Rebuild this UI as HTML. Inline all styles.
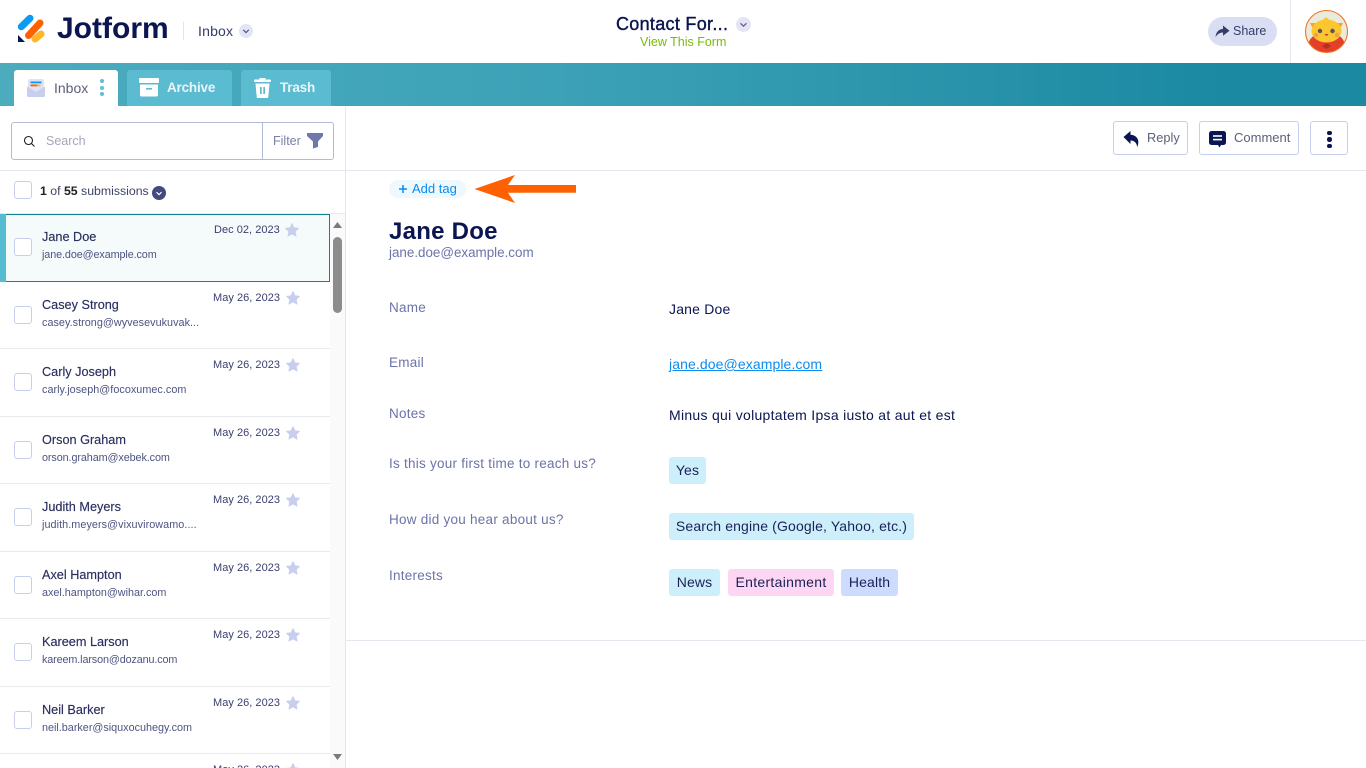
<!DOCTYPE html>
<html lang="en"><head><meta charset="utf-8"><title>Jotform Inbox</title>
<style>
html,body{margin:0;padding:0;width:1366px;height:768px;overflow:hidden}
body{background:#fff;font-family:"Liberation Sans",sans-serif;color:#0a1551}
#w{position:absolute;left:0;top:0;width:1366px;height:768px;overflow:hidden;background:#fff}
.a,.t{position:absolute}
.t{white-space:nowrap;line-height:16px}
svg{position:absolute;display:block;overflow:visible}
.cb{position:absolute;left:14px;width:16px;height:16px;border:1px solid #c8ceed;border-radius:3px;background:#fff}
.nm{position:absolute;left:42px;font-size:12.7px;color:#2a2f5e;line-height:16px;white-space:nowrap;-webkit-text-stroke:.15px #2a2f5e}
.em{position:absolute;left:42px;font-size:10.8px;color:#4d5480;line-height:14px;white-space:nowrap}
.dt{position:absolute;left:213px;font-size:11px;color:#3a4070;line-height:14px;white-space:nowrap;letter-spacing:.03px}
.sep{position:absolute;left:0;width:330px;height:1px;background:#e9eaf0}
.lb{position:absolute;left:389px;font-size:13.5px;color:#6c73a8;line-height:16px;white-space:nowrap;letter-spacing:.25px}
.v{position:absolute;left:669px;font-size:14px;color:#0a1551;line-height:16px;white-space:nowrap}
.pill{position:absolute;height:27px;line-height:27px;border-radius:3px;text-align:center;font-size:14px;color:#1b2155;white-space:nowrap;letter-spacing:.15px}
.btn{position:absolute;top:121px;height:34px;border:1px solid #c8ceed;border-radius:3px;background:#fff;box-sizing:border-box}
.s path{fill:#c8ceed;stroke:#c8ceed;stroke-width:.8;stroke-linejoin:round}
</style></head><body><div id="w">

<!-- header -->
<svg style="left:17px;top:14px" width="28" height="29" viewBox="0 0 28 29">
<line x1="4.300" y1="12.800" x2="13" y2="4.200" stroke="#0a9cf5" stroke-width="7" stroke-linecap="round"/>
<line x1="11.500" y1="21.500" x2="23" y2="9" stroke="#ff6100" stroke-width="7" stroke-linecap="round"/>
<line x1="18" y1="25" x2="24" y2="20" stroke="#ffb629" stroke-width="7" stroke-linecap="round"/>
<path d="M1 21 L1 28 L8 28 Z" fill="#0a1551"/>
</svg>
<div class="t" style="left:57px;top:11px;font-size:30px;line-height:36px;font-weight:bold;color:#0a1551;letter-spacing:0">Jotform</div>
<div class="a" style="left:183px;top:22px;width:1px;height:18px;background:#e3e5f0"></div>
<div class="t" style="left:198px;top:23px;font-size:14px;color:#343c6a;letter-spacing:.2px">Inbox</div>
<div class="a" style="left:239px;top:24px;width:14px;height:14px;border-radius:50%;background:#e3e5f5"></div>
<svg style="left:239px;top:24px" width="14" height="14"><path d="M4.200 5.800 L7 8.600 L9.800 5.800" fill="none" stroke="#555c88" stroke-width="1.200"/></svg>

<div class="t" style="left:616px;top:14px;font-size:18px;line-height:20px;color:#0a1551;letter-spacing:.3px;-webkit-text-stroke:.4px #0a1551">Contact For...</div>
<div class="a" style="left:736px;top:17px;width:15px;height:15px;border-radius:50%;background:#e3e5f5"></div>
<svg style="left:736px;top:17px" width="15" height="15"><path d="M4.500 6.300 L7.500 9.200 L10.500 6.300" fill="none" stroke="#555c88" stroke-width="1.200"/></svg>
<div class="t" style="left:640px;top:34px;font-size:12.5px;color:#78bb07">View This Form</div>

<div class="a" style="left:1208px;top:17px;width:69px;height:29px;border-radius:15px;background:#dadef3"></div>
<svg style="left:1215px;top:25px" width="15" height="13" viewBox="0 0 15 13"><path d="M0.500 12 C1 7 4 4 8 4 V0.500 L14.500 5.800 L8 10.800 V7.500 C5 7.500 2.500 9 0.500 12Z" fill="#343c6a"/></svg>
<div class="t" style="left:1233px;top:23px;font-size:12.5px;color:#343c6a">Share</div>
<div class="a" style="left:1290px;top:0;width:1px;height:63px;background:#e6e7ee"></div>

<svg style="left:1305px;top:10px" width="43" height="43" viewBox="0 0 43 43">
<clipPath id="c"><circle cx="21.500" cy="21.500" r="21"/></clipPath>
<circle cx="21.500" cy="21.500" r="21" fill="#e9ebdd"/>
<g clip-path="url(#c)">
<path d="M2 43 C2 31 7 25 12 25 L31 25 C36 25 41 31 41 43Z" fill="#e2402a"/>
<path d="M5 13 L13 13 L9 21Z M38 13 L30 13 L34 21Z" fill="#f0a72c"/>
<ellipse cx="21.500" cy="21" rx="15" ry="11.500" fill="#fcc62f"/>
<path d="M17 10.500 L21 7 L25 10.500Z" fill="#fcc62f"/>
<circle cx="15" cy="21" r="2.200" fill="#54545e"/><circle cx="27.500" cy="21" r="2.200" fill="#54545e"/>
<circle cx="11" cy="25" r="2" fill="#f59c4a"/><circle cx="32" cy="25" r="2" fill="#f59c4a"/>
<path d="M19.500 24 Q21.500 27.500 23.500 24Z" fill="#c33a2a"/>
<path d="M17 36 L21.500 33 L26 36 L21.500 39Z" fill="#b92c1f"/>
</g>
<circle cx="21.500" cy="21.500" r="21" fill="none" stroke="#f3711f" stroke-width="1.100"/>
</svg>

<!-- toolbar -->
<div class="a" style="left:0;top:63px;width:1366px;height:43px;background:linear-gradient(90deg,#4cacbe 0%,#3da2b7 40%,#1b89a2 90%,#1b89a2 100%)"></div>
<div class="a" style="left:14px;top:70px;width:104px;height:36px;background:#fff;border-radius:3px 3px 0 0"></div>
<svg style="left:26px;top:78px" width="20" height="20" viewBox="0 0 20 20">
<rect x="2" y="1" width="16" height="13" rx="2" fill="#dfe3f5"/>
<rect x="4.500" y="3.500" width="11" height="1.800" fill="#0a9cf5"/>
<rect x="4.500" y="6.500" width="7" height="1.800" fill="#ff6100"/>
<rect x="12" y="6.500" width="2.500" height="1.800" fill="#ffb629"/>
<path d="M1 8.500 L10 14 L19 8.500 V17.500 A1.500 1.500 0 0 1 17.500 19 H2.500 A1.500 1.500 0 0 1 1 17.500Z" fill="#c8ceed"/>
</svg>
<div class="t" style="left:54px;top:80px;font-size:14px;color:#5c6079">Inbox</div>
<div class="a" style="left:99.500px;top:79px;width:4.400px;height:4.400px;border-radius:50%;background:#5ec0d2"></div>
<div class="a" style="left:99.500px;top:85.500px;width:4.400px;height:4.400px;border-radius:50%;background:#5ec0d2"></div>
<div class="a" style="left:99.500px;top:92px;width:4.400px;height:4.400px;border-radius:50%;background:#5ec0d2"></div>

<div class="a" style="left:127px;top:70px;width:105px;height:36px;background:#5bbcd1;border-radius:3px 3px 0 0"></div>
<svg style="left:139px;top:78px" width="20" height="19" viewBox="0 0 20 19"><rect x="0" y="0" width="20" height="5" rx="1" fill="#fff"/><path d="M1 6.500 H19 V17 A1.500 1.500 0 0 1 17.500 18.500 H2.500 A1.500 1.500 0 0 1 1 17Z" fill="#fff"/><rect x="7" y="10" width="6" height="1.600" fill="#5bbcd1"/></svg>
<div class="t" style="left:167px;top:80px;font-size:13.5px;font-weight:bold;color:#e9f6f9;letter-spacing:-.2px">Archive</div>

<div class="a" style="left:241px;top:70px;width:90px;height:36px;background:#5bbcd1;border-radius:3px 3px 0 0"></div>
<svg style="left:254px;top:78px" width="17" height="20" viewBox="0 0 17 20"><rect x="0" y="1.500" width="17" height="2.500" rx="1" fill="#fff"/><rect x="5.500" y="0" width="6" height="2" fill="#fff"/><path d="M1.500 5.500 H15.500 L14.300 19 A1 1 0 0 1 13.300 20 H3.700 A1 1 0 0 1 2.700 19Z" fill="#fff"/><rect x="6" y="9" width="1.700" height="7" fill="#5bbcd1"/><rect x="9.300" y="9" width="1.700" height="7" fill="#5bbcd1"/></svg>
<div class="t" style="left:280px;top:80px;font-size:13.5px;font-weight:bold;color:#e9f6f9;letter-spacing:-.2px">Trash</div>

<!-- left pane -->
<div class="a" style="left:345px;top:106px;width:1px;height:662px;background:#e6e7ee"></div>
<div class="a" style="left:11px;top:122px;width:323px;height:38px;box-sizing:border-box;border:1px solid #b5b9d9;border-radius:3px;background:#fff"></div>
<div class="a" style="left:262px;top:123px;width:1px;height:36px;background:#b5b9d9"></div>
<svg style="left:23px;top:135px" width="13" height="13" viewBox="0 0 13 13"><circle cx="5.500" cy="5.500" r="4" fill="none" stroke="#1a1a2a" stroke-width="1.100"/><line x1="8.500" y1="8.500" x2="11.500" y2="11.500" stroke="#1a1a2a" stroke-width="1.100"/></svg>
<div class="t" style="left:46px;top:133px;font-size:12.5px;color:#a4a8b8">Search</div>
<div class="t" style="left:273px;top:133px;font-size:12.5px;color:#7a80a8">Filter</div>
<svg style="left:307px;top:133px" width="16" height="16" viewBox="0 0 16 16"><path d="M0 0 H16 V3 L11 8.500 V14 L6 15.500 V8.500 L0 3Z" fill="#7077ad"/></svg>
<div class="a" style="left:0;top:170px;width:1366px;height:1px;background:#e6e7ee"></div>

<div class="cb" style="top:181px"></div>
<div class="t" style="left:40px;top:183px;font-size:12.3px;color:#3e4468"><b style="color:#222">1</b> of <b style="color:#222">55</b> submissions</div>
<div class="a" style="left:152px;top:186px;width:14px;height:14px;border-radius:50%;background:#434a7e"></div>
<svg style="left:152px;top:186px" width="14" height="14"><path d="M4.500 6.200 L7 8.700 L9.500 6.200" fill="none" stroke="#fff" stroke-width="1.200"/></svg>
<div class="a" style="left:0;top:213px;width:345px;height:1px;background:#e9eaf0"></div>

<!-- selected row -->
<div class="a" style="left:0;top:214px;width:330px;height:68px;box-sizing:border-box;background:#f5fbfb;border:1px solid #13828f;border-left:0"></div>
<div class="a" style="left:0;top:214px;width:6px;height:68px;background:#56bcd1"></div>

<div id="rows">
<div class="cb" style="top:238px"></div><div class="nm" style="top:229px">Jane Doe</div><div class="em" style="top:248px;letter-spacing:-.1px">jane.doe@example.com</div><div class="dt" style="left:214px;top:223px">Dec 02, 2023</div>
<svg class="s" style="left:285px;top:223px" width="14" height="14" viewBox="0 0 14 14"><path d="M7 .5 L9 4.800 L13.500 5.300 L10.200 8.500 L11.100 13.200 L7 10.900 L2.900 13.200 L3.800 8.500 L.5 5.300 L5 4.800Z"/></svg>

<div class="sep" style="top:348px"></div>
<div class="cb" style="top:306px"></div><div class="nm" style="top:297px">Casey Strong</div><div class="em" style="top:316px;letter-spacing:.04px">casey.strong@wyvesevukuvak...</div><div class="dt" style="top:291px">May 26, 2023</div>
<svg class="s" style="left:286px;top:291px" width="14" height="14" viewBox="0 0 14 14"><path d="M7 .5 L9 4.800 L13.500 5.300 L10.200 8.500 L11.100 13.200 L7 10.900 L2.900 13.200 L3.800 8.500 L.5 5.300 L5 4.800Z"/></svg>

<div class="sep" style="top:416px"></div>
<div class="cb" style="top:373px"></div><div class="nm" style="top:364px">Carly Joseph</div><div class="em" style="top:383px;letter-spacing:.04px">carly.joseph@focoxumec.com</div><div class="dt" style="top:358px">May 26, 2023</div>
<svg class="s" style="left:286px;top:358px" width="14" height="14" viewBox="0 0 14 14"><path d="M7 .5 L9 4.800 L13.500 5.300 L10.200 8.500 L11.100 13.200 L7 10.900 L2.900 13.200 L3.800 8.500 L.5 5.300 L5 4.800Z"/></svg>

<div class="sep" style="top:483px"></div>
<div class="cb" style="top:441px"></div><div class="nm" style="top:432px">Orson Graham</div><div class="em" style="top:451px;letter-spacing:-.09px">orson.graham@xebek.com</div><div class="dt" style="top:426px">May 26, 2023</div>
<svg class="s" style="left:286px;top:426px" width="14" height="14" viewBox="0 0 14 14"><path d="M7 .5 L9 4.800 L13.500 5.300 L10.200 8.500 L11.100 13.200 L7 10.900 L2.900 13.200 L3.800 8.500 L.5 5.300 L5 4.800Z"/></svg>

<div class="sep" style="top:551px"></div>
<div class="cb" style="top:508px"></div><div class="nm" style="top:499px">Judith Meyers</div><div class="em" style="top:518px;letter-spacing:.07px">judith.meyers@vixuvirowamo....</div><div class="dt" style="top:493px">May 26, 2023</div>
<svg class="s" style="left:286px;top:493px" width="14" height="14" viewBox="0 0 14 14"><path d="M7 .5 L9 4.800 L13.500 5.300 L10.200 8.500 L11.100 13.200 L7 10.900 L2.900 13.200 L3.800 8.500 L.5 5.300 L5 4.800Z"/></svg>

<div class="sep" style="top:618px"></div>
<div class="cb" style="top:576px"></div><div class="nm" style="top:567px">Axel Hampton</div><div class="em" style="top:586px">axel.hampton@wihar.com</div><div class="dt" style="top:561px">May 26, 2023</div>
<svg class="s" style="left:286px;top:561px" width="14" height="14" viewBox="0 0 14 14"><path d="M7 .5 L9 4.800 L13.500 5.300 L10.200 8.500 L11.100 13.200 L7 10.900 L2.900 13.200 L3.800 8.500 L.5 5.300 L5 4.800Z"/></svg>

<div class="sep" style="top:686px"></div>
<div class="cb" style="top:643px"></div><div class="nm" style="top:634px">Kareem Larson</div><div class="em" style="top:653px;letter-spacing:-.12px">kareem.larson@dozanu.com</div><div class="dt" style="top:628px">May 26, 2023</div>
<svg class="s" style="left:286px;top:628px" width="14" height="14" viewBox="0 0 14 14"><path d="M7 .5 L9 4.800 L13.500 5.300 L10.200 8.500 L11.100 13.200 L7 10.900 L2.900 13.200 L3.800 8.500 L.5 5.300 L5 4.800Z"/></svg>

<div class="sep" style="top:753px"></div>
<div class="cb" style="top:711px"></div><div class="nm" style="top:702px">Neil Barker</div><div class="em" style="top:721px">neil.barker@siquxocuhegy.com</div><div class="dt" style="top:696px">May 26, 2023</div>
<svg class="s" style="left:286px;top:696px" width="14" height="14" viewBox="0 0 14 14"><path d="M7 .5 L9 4.800 L13.500 5.300 L10.200 8.500 L11.100 13.200 L7 10.900 L2.900 13.200 L3.800 8.500 L.5 5.300 L5 4.800Z"/></svg>

<div class="dt" style="top:763px">May 26, 2023</div>
<svg class="s" style="left:286px;top:763px" width="14" height="14" viewBox="0 0 14 14"><path d="M7 .5 L9 4.800 L13.500 5.300 L10.200 8.500 L11.100 13.200 L7 10.900 L2.900 13.200 L3.800 8.500 L.5 5.300 L5 4.800Z"/></svg>
</div>

<!-- scrollbar -->
<div class="a" style="left:330px;top:214px;width:15px;height:554px;background:#fafafa"></div>
<svg style="left:333px;top:222px" width="9" height="6"><path d="M0 6 L4.500 0 L9 6Z" fill="#7b7b7b"/></svg>
<svg style="left:333px;top:754px" width="9" height="6"><path d="M0 0 L4.500 6 L9 0Z" fill="#7b7b7b"/></svg>
<div class="a" style="left:333px;top:237px;width:9px;height:76px;border-radius:5px;background:#8c8c8c"></div>

<!-- action buttons -->
<div class="btn" style="left:1113px;width:75px"></div>
<svg style="left:1123px;top:131px" width="16" height="16" viewBox="0 0 16 16"><path d="M0.500 6 L7.500 0 V3.800 C12 3.800 15.300 7 15.300 11 C15.300 13 14.800 15 14.200 16 C13.800 12.500 12 9.500 7.500 9.500 V13Z" fill="#0a1551"/></svg>
<div class="t" style="left:1147px;top:130px;font-size:12.8px;color:#5c6079">Reply</div>
<div class="btn" style="left:1199px;width:100px"></div>
<svg style="left:1209px;top:131px" width="17" height="17" viewBox="0 0 17 17"><path d="M2.500 0 H14.500 A2.500 2.500 0 0 1 17 2.500 V11.500 A2.500 2.500 0 0 1 14.500 14 H12 L10.500 16.500 L9 14 H2.500 A2.500 2.500 0 0 1 0 11.500 V2.500 A2.500 2.500 0 0 1 2.500 0Z" fill="#0a1551"/><rect x="4" y="4.200" width="9" height="1.600" fill="#fff"/><rect x="4" y="7.800" width="9" height="1.600" fill="#fff"/></svg>
<div class="t" style="left:1234px;top:130px;font-size:13px;color:#5c6079">Comment</div>
<div class="btn" style="left:1310px;width:38px"></div>
<div class="a" style="left:1327px;top:130.500px;width:4.500px;height:4.500px;border-radius:50%;background:#0a1551"></div>
<div class="a" style="left:1327px;top:137px;width:4.500px;height:4.500px;border-radius:50%;background:#0a1551"></div>
<div class="a" style="left:1327px;top:143.500px;width:4.500px;height:4.500px;border-radius:50%;background:#0a1551"></div>

<!-- content -->
<div class="a" style="left:389px;top:180px;width:77px;height:18px;border-radius:9px;background:#edf8ff"></div>
<svg style="left:398px;top:184px" width="10" height="10"><path d="M5 1 V9 M1 5 H9" stroke="#0a8cf0" stroke-width="1.500"/></svg>
<div class="t" style="left:412px;top:181px;font-size:13px;color:#0a8cf0">Add tag</div>
<svg style="left:474px;top:175px" width="103" height="29" viewBox="0 0 103 29"><path d="M0.500 14 L41 0 L34 10 H102 V17.700 H34 L41 28Z" fill="#ff6100"/></svg>

<div class="t" style="left:389px;top:218px;font-size:24px;line-height:28px;font-weight:bold;color:#0a1551;letter-spacing:.25px">Jane Doe</div>
<div class="t" style="left:389px;top:245px;font-size:13.4px;color:#6c73a8">jane.doe@example.com</div>

<div class="lb" style="top:300px">Name</div>
<div class="v" style="top:301px;letter-spacing:.2px">Jane Doe</div>
<div class="lb" style="top:355px">Email</div>
<div class="v" style="top:356px;color:#0a8cf0;text-decoration:underline;letter-spacing:.1px">jane.doe@example.com</div>
<div class="lb" style="top:406px">Notes</div>
<div class="v" style="top:407px;letter-spacing:.29px">Minus qui voluptatem Ipsa iusto at aut et est</div>
<div class="lb" style="top:456px">Is this your first time to reach us?</div>
<div class="pill" style="left:669px;top:457px;width:37px;background:#cdeffc">Yes</div>
<div class="lb" style="top:512px">How did you hear about us?</div>
<div class="pill" style="left:669px;top:513px;width:245px;background:#cdeffc">Search engine (Google, Yahoo, etc.)</div>
<div class="lb" style="top:568px">Interests</div>
<div class="pill" style="left:669px;top:569px;width:51px;background:#cdeffc">News</div>
<div class="pill" style="left:728px;top:569px;width:106px;background:#fdd6f4;letter-spacing:.3px">Entertainment</div>
<div class="pill" style="left:841px;top:569px;width:57px;background:#cddcfe">Health</div>
<div class="a" style="left:346px;top:640px;width:1020px;height:1px;background:#e6e7ee"></div>

</div></body></html>
